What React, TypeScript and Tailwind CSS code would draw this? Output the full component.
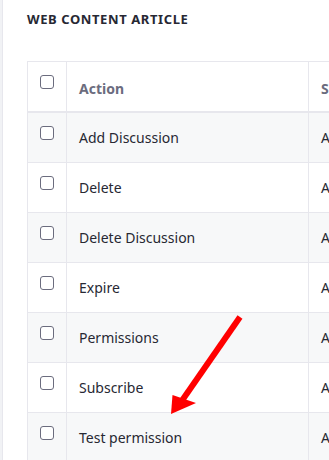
import React from 'react';

const actions = [
  'Add Discussion',
  'Delete',
  'Delete Discussion',
  'Expire',
  'Permissions',
  'Subscribe',
  'Test permission',
];

function Checkbox() {
  return <span className="block w-[14px] h-[14px] rounded-[3px] border border-[#6b6c7e] bg-white" />;
}

function App() {
  return (
    <div className="relative flex h-[460px] w-[329px] overflow-hidden bg-white font-['Noto_Sans',sans-serif] text-[#272833]">
      <div className="w-[2px] shrink-0 bg-[#f1f2f5]" />
      <div className="w-px shrink-0 bg-[#e7e7ed]" />
      <div className="flex-1 min-w-0 pl-[24px]">
        <h2 className="pt-[10px] h-[61px] text-[13px] font-bold tracking-[0.6px] text-[#272833]">
          WEB CONTENT ARTICLE
        </h2>
        <div className="w-[400px] border-l border-t border-[#e7e7ed]">
          <div className="flex h-[51px] border-b-2 border-[#e7e7ed]">
            <div className="w-[39px] shrink-0 border-r border-[#e7e7ed] pl-[12px] pt-[13px]">
              <Checkbox />
            </div>
            <div className="w-[242px] shrink-0 border-r border-[#e7e7ed] pl-[12px] pt-[16px] text-[14px] font-bold text-[#6b6c7e]">
              Action
            </div>
            <div className="flex-1 pl-[12px] pt-[16px] text-[14px] font-bold text-[#6b6c7e]">Scope</div>
          </div>
          {actions.map((a, i) => (
            <div
              key={a}
              className={`flex h-[50px] border-b border-[#e7e7ed] ${i % 2 === 0 ? 'bg-[#f7f8f9]' : 'bg-white'}`}
            >
              <div className="w-[39px] shrink-0 border-r border-[#e7e7ed] pl-[12px] pt-[13px]">
                <Checkbox />
              </div>
              <div className="w-[242px] shrink-0 border-r border-[#e7e7ed] pl-[12px] pt-[14px] text-[14px]">
                {a}
              </div>
              <div className="flex-1 pl-[12px] pt-[14px] text-[14px]">All Sites</div>
            </div>
          ))}
        </div>
      </div>
      <svg className="absolute left-0 top-0 pointer-events-none" width="329" height="460" viewBox="0 0 329 460">
        <line x1="240" y1="317" x2="181" y2="402" stroke="#ff0000" strokeWidth="6" />
        <polygon points="171,414 172.5,395 196,403" fill="#ff0000" />
      </svg>
    </div>
  );
}

export default App;
